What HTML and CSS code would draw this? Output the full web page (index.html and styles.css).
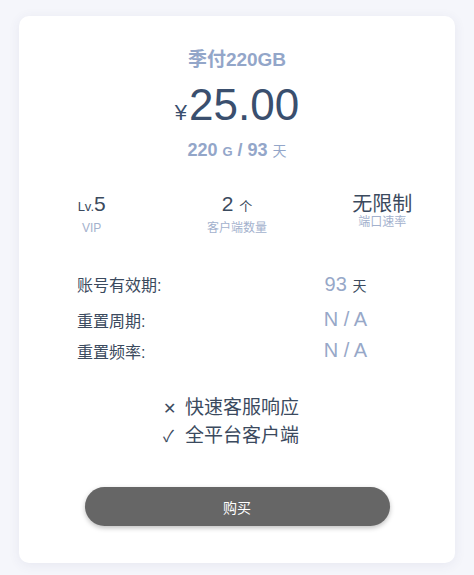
FILE: index.html
```html
<!DOCTYPE html>
<html lang="zh-CN">
<head>
    <meta charset="UTF-8">
    <meta name="viewport" content="width=device-width, initial-scale=1.0">
    <title>季付220GB</title>
    <link rel="stylesheet" href="styles.css">
</head>
<body>
    <div class="card">
        <div class="plan-name">季付220GB</div>
        <div class="price">
            <span class="currency">¥</span><span class="amount">25.00</span>
        </div>
        <div class="plan-meta">220 <small>G</small> / 93 <em>天</em></div>

        <div class="stats">
            <div class="stat">
                <div class="stat-value"><small>Lv.</small>5</div>
                <div class="stat-label">VIP</div>
            </div>
            <div class="stat">
                <div class="stat-value">2 <small>个</small></div>
                <div class="stat-label">客户端数量</div>
            </div>
            <div class="stat">
                <div class="stat-value text">无限制</div>
                <div class="stat-label tight">端口速率</div>
            </div>
        </div>

        <div class="details">
            <div class="detail first">
                <span class="detail-key">账号有效期:</span>
                <span class="detail-val">93 <small>天</small></span>
            </div>
            <div class="detail">
                <span class="detail-key">重置周期:</span>
                <span class="detail-val">N / A</span>
            </div>
            <div class="detail">
                <span class="detail-key">重置频率:</span>
                <span class="detail-val">N / A</span>
            </div>
        </div>

        <ul class="features">
            <li><span class="mark">✕</span>快速客服响应</li>
            <li><span class="mark">✓</span>全平台客户端</li>
        </ul>

        <button class="buy">购买</button>
    </div>
</body>
</html>
```

FILE: styles.css
```css
body {
    margin: 0;
    padding: 16px 19px 13px;
    background: #f5f6fb;
    font-family: "Liberation Sans", Arial, "Noto Sans CJK SC", sans-serif;
    color: #3b4a5e;
}
.card {
    background: #fff;
    border-radius: 10px;
    box-shadow: 0 2px 12px rgba(60, 70, 110, 0.08);
    padding: 32px 0 37px;
    text-align: center;
}
.plan-name {
    font-size: 19px;
    font-weight: bold;
    line-height: 24px;
    color: #93a6c9;
}
.price {
    margin-top: 9px;
    height: 48px;
    line-height: 48px;
    color: #3a4f6e;
}
.currency {
    font-size: 22px;
    margin-right: 2px;
}
.amount {
    font-size: 44px;
}
.plan-meta {
    margin-top: 9px;
    font-size: 18px;
    font-weight: bold;
    line-height: 24px;
    color: #93a6c9;
}
.plan-meta small {
    font-size: 13px;
}
.plan-meta em {
    font-style: normal;
    font-weight: normal;
    font-size: 14px;
}
.stats {
    display: grid;
    grid-template-columns: 1fr 1fr 1fr;
    margin-top: 28px;
}
.stat-value {
    font-size: 21px;
    line-height: 24px;
    color: #3b4a5e;
}
.stat-value small {
    font-size: 13px;
}
.stat-value.text {
    font-size: 20px;
}
.stat-label {
    margin-top: 2px;
    font-size: 12px;
    line-height: 14px;
    color: #a3b1cd;
}
.stat-label.tight {
    margin-top: -1px;
}
.details {
    margin: 29px 20px 0 58px;
}
.detail {
    display: grid;
    grid-template-columns: 1fr 1fr;
    align-items: center;
    height: 31px;
}
.detail.first {
    height: 40px;
}
.detail-key {
    text-align: left;
    font-size: 16px;
    color: #3b4a5e;
}
.detail-val {
    font-size: 20px;
    color: #97a8c8;
}
.detail-val small {
    font-size: 14px;
    color: #3b4a5e;
}
.features {
    list-style: none;
    margin: 28px 0 0;
    padding: 0 12px 0 0;
    font-size: 19px;
    line-height: 27px;
    color: #3b4a5e;
}
.mark {
    display: inline-block;
    width: 22px;
    font-size: 16px;
    text-align: left;
}
.buy {
    display: block;
    width: 305px;
    height: 39px;
    margin: 37px auto 0;
    border: none;
    border-radius: 20px;
    background: #666;
    color: #fff;
    font-family: inherit;
    font-size: 14px;
    box-shadow: 0 2px 5px rgba(0, 0, 0, 0.25);
    cursor: pointer;
}
```
